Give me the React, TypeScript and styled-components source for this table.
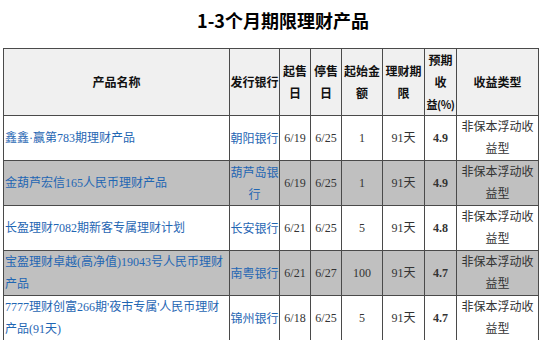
import styled, { createGlobalStyle } from 'styled-components';

const GlobalStyle = createGlobalStyle`
  body {
    margin: 0;
    background: #fff;
    font-family: "Liberation Serif", "Noto Sans CJK SC", sans-serif;
  }
`;

type Product = {
  name: string;
  bank: string;
  start: string;
  stop: string;
  min: string;
  term: string;
  rate: string;
  kind: string;
};

const PRODUCTS: Product[] = [
  { name: '鑫鑫·赢第783期理财产品', bank: '朝阳银行', start: '6/19', stop: '6/25', min: '1', term: '91天', rate: '4.9', kind: '非保本浮动收益型' },
  { name: '金葫芦宏信165人民币理财产品', bank: '葫芦岛银行', start: '6/19', stop: '6/25', min: '1', term: '91天', rate: '4.9', kind: '非保本浮动收益型' },
  { name: '长盈理财7082期新客专属理财计划', bank: '长安银行', start: '6/21', stop: '6/25', min: '5', term: '91天', rate: '4.8', kind: '非保本浮动收益型' },
  { name: '宝盈理财卓越(高净值)19043号人民币理财产品', bank: '南粤银行', start: '6/21', stop: '6/27', min: '100', term: '91天', rate: '4.7', kind: '非保本浮动收益型' },
  { name: "7777理财创富266期'夜市专属'人民币理财产品(91天)", bank: '锦州银行', start: '6/18', stop: '6/25', min: '5', term: '91天', rate: '4.7', kind: '非保本浮动收益型' },
];

const COLS = [226, 50, 31, 31, 41, 42, 32, 82];

function App() {
  return (
    <Page>
      <GlobalStyle />
      <Title>1-3个月期限理财产品</Title>
      <Table>
        <colgroup>
          {COLS.map((w, i) => (
            <col key={i} style={{ width: w }} />
          ))}
        </colgroup>
        <thead>
          <tr>
            <Th>产品名称</Th>
            <Th>发行银行</Th>
            <Th>起售<br />日</Th>
            <Th>停售<br />日</Th>
            <Th>起始金<br />额</Th>
            <Th>理财期<br />限</Th>
            <Th>预期<br />收<br /><NoWrap>益(%)</NoWrap></Th>
            <Th>收益类型</Th>
          </tr>
        </thead>
        <tbody>
          {PRODUCTS.map((p, i) => (
            <Row key={p.name} $shaded={i % 2 === 1}>
              <NameCell>{p.name}</NameCell>
              <BankCell>{p.bank}</BankCell>
              <Td>{p.start}</Td>
              <Td>{p.stop}</Td>
              <Td>{p.min}</Td>
              <Td>{p.term}</Td>
              <RateCell>{p.rate}</RateCell>
              <Td>{p.kind}</Td>
            </Row>
          ))}
        </tbody>
      </Table>
    </Page>
  );
}

export default App;

const Page = styled.div`
  padding: 0 3px;
  width: 536px;
`;

const Title = styled.h1`
  margin: 0;
  padding: 8px 0 16px 24px;
  font-family: "Noto Sans CJK SC", sans-serif;
  font-size: 18px;
  font-weight: bold;
  line-height: 24px;
  text-align: center;
  color: #000;
`;

const Table = styled.table`
  border-collapse: collapse;
  table-layout: fixed;
  width: 536px;
  font-size: 12px;
  line-height: 22px;
`;

const Th = styled.th`
  background: #f0f0f0;
  border: 1px solid #4a4a4a;
  padding: 0;
  height: 66px;
  font-family: "Noto Sans CJK SC", sans-serif;
  font-weight: bold;
  font-size: 12px;
  color: #111;
  text-align: center;
  vertical-align: middle;
`;

const NoWrap = styled.span`
  white-space: nowrap;
  font-size: 11px;
  letter-spacing: -0.5px;
`;

const Row = styled.tr<{ $shaded: boolean }>`
  background: ${(p) => (p.$shaded ? '#c0c0c0' : '#fff')};
`;

const Td = styled.td`
  border: 1px solid #4a4a4a;
  padding: 0;
  height: 44px;
  color: #333;
  text-align: center;
  vertical-align: middle;
`;

const NameCell = styled(Td)`
  text-align: left;
  padding-left: 1px;
  color: #1f66b3;
`;

const BankCell = styled(Td)`
  color: #1f66b3;
  font-family: "Noto Sans CJK SC", sans-serif;
`;

const RateCell = styled(Td)`
  font-weight: bold;
`;
